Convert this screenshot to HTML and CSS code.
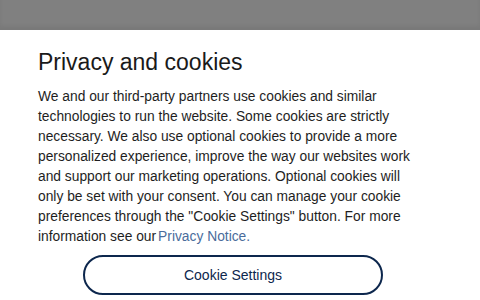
FILE: index.html
```html
<!DOCTYPE html>
<html lang="en">

<head>
    <meta charset="UTF-8">
    <meta name="viewport" content="width=device-width, initial-scale=1.0">
    <title>Privacy and cookies</title>
    <link rel="stylesheet" href="styles.css">
</head>

<body>
    <!-- 背景遮罩 -->
    <div class="backdrop"></div>

    <!-- 隐私弹窗 -->
    <div class="consent-panel">
        <h2 class="consent-title">Privacy and cookies</h2>
        <p class="consent-text">
            We and our third-party partners use cookies and similar technologies to run the website. Some cookies are strictly necessary. We also use optional cookies to provide a more personalized experience, improve the way our websites work and support our marketing operations. Optional cookies will only be set with your consent. You can manage your cookie preferences through the "Cookie Settings" button. For more information see our<a class="consent-link" href="#">Privacy Notice.</a>
        </p>
        <div class="consent-actions">
            <button class="settings-button">Cookie Settings</button>
        </div>
    </div>
</body>

</html>
```

FILE: styles.css
```css
/* 基础样式 */
body {
    margin: 0;
    background-color: #ffffff;
    font-family: 'Liberation Sans', Arial, sans-serif;
    overflow: hidden;
}

/* 背景遮罩 */
.backdrop {
    height: 30px;
    background-color: #808080;
    box-shadow: inset 0 -4px 4px rgba(0, 0, 0, 0.06);
}

/* 弹窗 */
.consent-panel {
    background-color: #ffffff;
    padding: 18px 62px 0 38px;
}

.consent-title {
    margin: 0 0 11px 0;
    font-size: 23px;
    font-weight: normal;
    line-height: 28px;
    color: #1a1a1a;
}

.consent-text {
    margin: 0;
    font-size: 13.8px;
    line-height: 20px;
    color: #1e1e1e;
}

.consent-link {
    color: #4a6c9b;
    text-decoration: none;
    margin-left: 2px;
}

/* 按钮 */
.consent-actions {
    display: flex;
    padding-left: 45px;
    margin-top: 8px;
}

.settings-button {
    flex: none;
    width: 300px;
    height: 40px;
    border: 2px solid #0d274d;
    border-radius: 9999px;
    background-color: #ffffff;
    color: #0d274d;
    font-family: 'Liberation Sans', Arial, sans-serif;
    font-size: 14px;
    cursor: pointer;
}
```
